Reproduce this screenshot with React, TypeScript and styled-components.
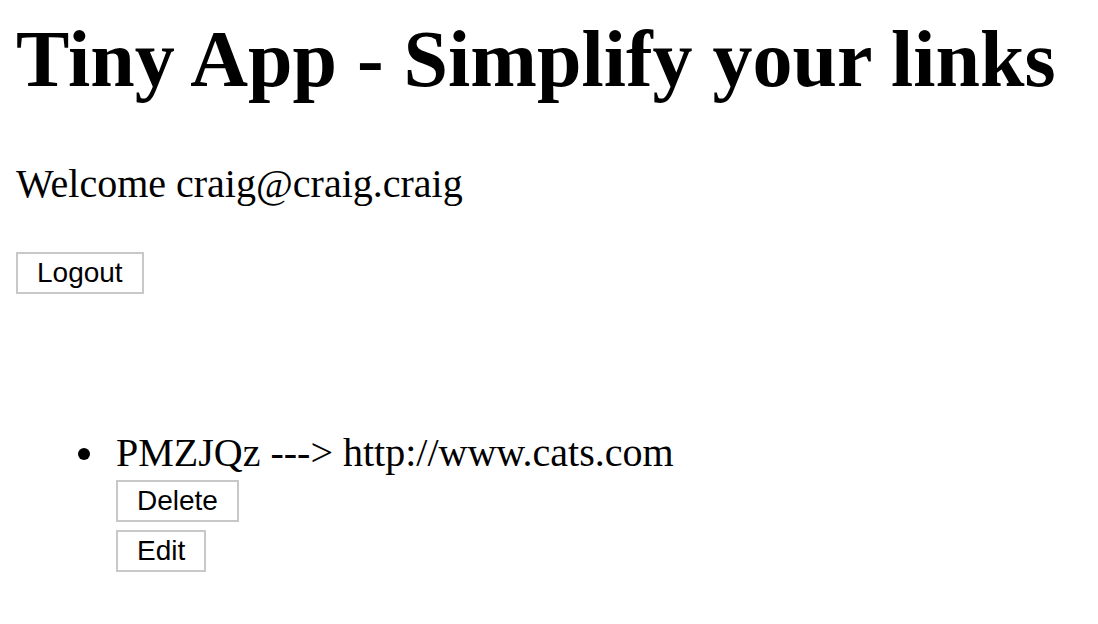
import styled, { createGlobalStyle } from 'styled-components';

const GlobalStyle = createGlobalStyle`
  body {
    margin: 0;
    padding: 0 16px;
    background: #fff;
    color: #000;
    font-family: "Liberation Serif", "Times New Roman", serif;
  }
`;

const Title = styled.h1`
  font-size: 80px;
  font-weight: bold;
  line-height: 1;
  margin: 19px 0 0 0;
`;

const Welcome = styled.p`
  font-size: 40px;
  line-height: 1;
  margin: 65px 0 0 0;
`;

const Button = styled.button`
  display: block;
  box-sizing: border-box;
  height: 42px;
  padding: 0 19px;
  border: 2px solid #c8c8c8;
  background: #fff;
  color: #000;
  font-family: "Liberation Sans", Arial, sans-serif;
  font-size: 28px;
  line-height: 1;
  cursor: pointer;
`;

const LogoutButton = styled(Button)`
  margin-top: 48px;
`;

const UrlList = styled.ul`
  margin: 139px 0 0 0;
  padding-left: 100px;
  font-size: 40px;
  line-height: 1;
  list-style: none;
`;

const UrlItem = styled.li`
  position: relative;

  &::before {
    content: '';
    position: absolute;
    left: -38px;
    top: 15px;
    width: 12px;
    height: 12px;
    border-radius: 50%;
    background: #000;
  }
`;

const Actions = styled.div`
  display: flex;
  flex-direction: column;
  align-items: flex-start;
  gap: 8px;
  margin-top: 7px;
`;

const urls = [{ id: 'PMZJQz', long: 'http://www.cats.com' }];

export default function App() {
  return (
    <>
      <GlobalStyle />
      <Title>Tiny App - Simplify your links</Title>
      <Welcome>Welcome craig@craig.craig</Welcome>
      <LogoutButton>Logout</LogoutButton>
      <UrlList>
        {urls.map((u) => (
          <UrlItem key={u.id}>
            {u.id} ---&gt; {u.long}
            <Actions>
              <Button>Delete</Button>
              <Button>Edit</Button>
            </Actions>
          </UrlItem>
        ))}
      </UrlList>
    </>
  );
}
